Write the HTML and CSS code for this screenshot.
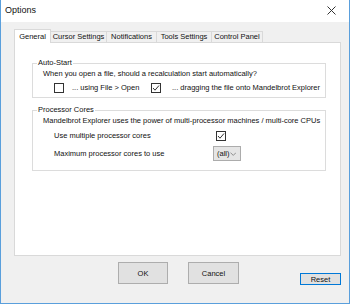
FILE: index.html
```html
<!DOCTYPE html>
<html>
<head>
<meta charset="utf-8">
<link rel="stylesheet" href="styles.css">
</head>
<body>
<div class="window">
  <div class="titlebar">
    <span class="title">Options</span>
    <svg class="close" width="9" height="9" viewBox="0 0 9 9"><path d="M0.5 0.5L8.5 8.5M8.5 0.5L0.5 8.5" stroke="#333" stroke-width="1"/></svg>
  </div>
  <div class="content">
    <div class="tabs">
      <div class="tab selected w1">General</div>
      <div class="tab w2">Cursor Settings</div>
      <div class="tab w3">Notifications</div>
      <div class="tab w4">Tools Settings</div>
      <div class="tab w5">Control Panel</div>
    </div>
    <div class="panel">
      <fieldset class="group auto">
        <legend>Auto-Start</legend>
        <div class="line intro">When you open a file, should a recalculation start automatically?</div>
        <div class="line checks">
          <span class="cb"></span><span class="lbl1">... using File &gt; Open</span>
          <span class="cb checked"><svg width="8" height="8" viewBox="0 0 8 8"><path d="M1 4L3 6.2L7 1.5" fill="none" stroke="#333" stroke-width="1"/></svg></span><span class="lbl2">... dragging the file onto Mandelbrot Explorer</span>
        </div>
      </fieldset>
      <fieldset class="group cores">
        <legend>Processor Cores</legend>
        <div class="line intro">Mandelbrot Explorer uses the power of multi-processor machines / multi-core CPUs</div>
        <div class="opts">
          <span class="optlbl">Use multiple processor cores</span>
          <span class="cb checked cb2"><svg width="8" height="8" viewBox="0 0 8 8"><path d="M1 4L3 6.2L7 1.5" fill="none" stroke="#333" stroke-width="1"/></svg></span>
          <span class="optlbl">Maximum processor cores to use</span>
          <span class="select"><span>(all)</span><svg width="7" height="4" viewBox="0 0 7 4"><path d="M0.5 0.5L3.5 3.5L6.5 0.5" fill="none" stroke="#888" stroke-width="1"/></svg></span>
        </div>
      </fieldset>
    </div>
    <div class="buttons">
      <div class="btn ok">OK</div>
      <div class="btn cancel">Cancel</div>
      <div class="btn reset">Reset</div>
    </div>
  </div>
</div>
</body>
</html>
```
FILE: styles.css
```css
html, body {
  margin: 0;
  padding: 0;
  background: #f0f0f0;
}
.window {
  width: 350px;
  height: 304px;
  box-sizing: border-box;
  border-left: 1px solid #5a9fdc;
  border-right: 1px solid #5a9fdc;
  border-bottom: 1px solid #5a9fdc;
  background: #f0f0f0;
  font-family: "Liberation Sans", Arial, sans-serif;
  font-size: 7.5px;
  color: #111;
  display: flex;
  flex-direction: column;
}
.titlebar {
  height: 20px;
  background: #fff;
  display: flex;
  align-items: center;
  justify-content: space-between;
  padding: 0 13px 2px 4px;
}
.title {
  font-size: 9px;
  color: #111;
}
.close {
  display: block;
}
.content {
  flex: 1;
  padding: 7px 0 0 13px;
}
.tabs {
  display: flex;
  align-items: flex-end;
  height: 13px;
}
.tab {
  height: 11px;
  box-sizing: border-box;
  border: 1px solid #d9d9d9;
  border-bottom: none;
  border-left: none;
  background: #f0f0f0;
  line-height: 10px;
  text-align: center;
  white-space: nowrap;
}
.tab.selected {
  height: 14px;
  background: #fff;
  border-left: 1px solid #d9d9d9;
  margin-bottom: -1px;
  position: relative;
  z-index: 1;
  line-height: 13px;
}
.w1 { width: 37px; }
.w2 { width: 56px; }
.w3 { width: 50px; }
.w4 { width: 55px; }
.w5 { width: 51px; }
.panel {
  width: 327px;
  height: 214px;
  box-sizing: border-box;
  background: #fff;
  border: 1px solid #d9d9d9;
  padding: 15px 0 0 17px;
}
.group {
  margin: 0;
  padding: 0 0 0 10px;
  width: 294px;
  box-sizing: border-box;
  border: 1px solid #dcdcdc;
  min-width: 0;
}
.group legend {
  padding: 0 1px;
  margin-left: -6px;
  line-height: 10px;
}
.line {
  line-height: 10px;
  white-space: nowrap;
}
.auto {
  height: 40px;
}
.auto .intro {
  margin-top: 1px;
}
.checks {
  display: flex;
  align-items: center;
  margin-top: 4px;
  padding-left: 11px;
}
.cb {
  width: 10px;
  height: 10px;
  box-sizing: border-box;
  border: 1px solid #333;
  background: #fff;
  display: inline-flex;
  align-items: center;
  justify-content: center;
  flex: none;
}
.lbl1 {
  margin-left: 8px;
  width: 79px;
}
.lbl2 {
  margin-left: 11px;
}
.cores {
  margin-top: 7px;
  height: 66px;
}
.cores .intro {
  margin-top: 1px;
}
.opts {
  display: grid;
  grid-template-columns: 159px auto;
  align-items: center;
  row-gap: 5px;
  padding-left: 11px;
  margin-top: 5px;
}
.optlbl {
  line-height: 10px;
}
.cb2 {
  margin-left: 3px;
}
.select {
  width: 28px;
  height: 15px;
  box-sizing: border-box;
  background: #e5e5e5;
  border: 1px solid #acacac;
  display: flex;
  align-items: center;
  justify-content: space-between;
  padding: 0 4px 0 3px;
}
.select svg {
  display: block;
}
.buttons {
  display: flex;
  align-items: flex-start;
  margin-top: 6px;
}
.btn {
  box-sizing: border-box;
  background: #e1e1e1;
  border: 1px solid #adadad;
  display: flex;
  align-items: center;
  justify-content: center;
}
.ok {
  width: 50px;
  height: 22px;
  margin-left: 104px;
}
.cancel {
  width: 51px;
  height: 22px;
  margin-left: 20px;
}
.reset {
  width: 41px;
  height: 12px;
  margin-left: 61px;
  margin-top: 11px;
  border: 1px solid #0078d7;
}
```
